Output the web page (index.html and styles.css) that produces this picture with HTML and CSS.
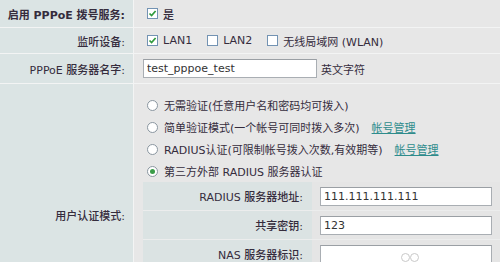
FILE: index.html
```html
<!DOCTYPE html>
<html lang="zh-CN">
<head>
    <meta charset="UTF-8">
    <title>PPPoE 服务器设置</title>
    <link rel="stylesheet" href="styles.css">
</head>
<body>
    <div class="form">
        <!-- 启用 -->
        <div class="label row-1 strong">启用 PPPoE 拨号服务:</div>
        <div class="value row-1">
            <span class="cb checked"><svg viewBox="0 0 9 9"><path d="M1.5 4.5 L3.6 6.6 L7.6 2"/></svg></span>
            <span class="medium">是</span>
        </div>

        <!-- 监听设备 -->
        <div class="label row-2">监听设备:</div>
        <div class="value row-2">
            <span class="cb checked"><svg viewBox="0 0 9 9"><path d="M1.5 4.5 L3.6 6.6 L7.6 2"/></svg></span>
            <span class="item">LAN1</span>
            <span class="cb"></span>
            <span class="item">LAN2</span>
            <span class="cb"></span>
            <span>无线局域网 (WLAN)</span>
        </div>

        <!-- 服务器名字 -->
        <div class="label row-3">PPPoE 服务器名字:</div>
        <div class="value row-3">
            <input class="text name-input" type="text" value="test_pppoe_test">
            <span class="hint">英文字符</span>
        </div>

        <!-- 认证模式 -->
        <div class="label row-4">用户认证模式:</div>
        <div class="value auth">
            <div class="options">
                <div class="option"><span class="radio"></span>无需验证(任意用户名和密码均可拨入)</div>
                <div class="option"><span class="radio"></span>简单验证模式(一个帐号可同时拨入多次)<a class="link" href="#">帐号管理</a></div>
                <div class="option"><span class="radio"></span>RADIUS认证(可限制帐号拨入次数,有效期等)<a class="link" href="#">帐号管理</a></div>
                <div class="option"><span class="radio checked"></span>第三方外部 RADIUS 服务器认证</div>
            </div>
            <div class="radius">
                <div class="sub-label">RADIUS 服务器地址:</div>
                <div class="sub-value"><input class="text" type="text" value="111.111.111.111"></div>
                <div class="sub-label">共享密钥:</div>
                <div class="sub-value"><input class="text" type="text" value="123"></div>
                <div class="sub-label">NAS 服务器标识:</div>
                <div class="sub-value nas">
                    <input class="text" type="text" value="">
                    <span class="rings"><span class="ring"></span><span class="ring"></span></span>
                </div>
            </div>
        </div>
    </div>
</body>
</html>
```

FILE: styles.css
```css
* {
    margin: 0;
    padding: 0;
    box-sizing: border-box;
}

body {
    background-color: #e7e7e7;
    font-family: "DejaVu Sans", "Noto Sans CJK SC", sans-serif;
    font-size: 11px;
    color: #352c3d;
    overflow: hidden;
}

/* 表单网格 */
.form {
    display: grid;
    grid-template-columns: 133px 1fr;
    gap: 1px;
    background-color: #f3f4f4;
}

.label {
    background-color: #dbe4e4;
    font-weight: 500;
    display: flex;
    align-items: center;
    justify-content: flex-end;
    padding-right: 8px;
}

.value {
    background-color: #e7e7e7;
    display: flex;
    align-items: center;
    padding-left: 9px;
}

.row-1 { height: 27px; }
.row-2 { height: 25px; }
.row-3 { height: 29px; }

.label.strong {
    font-weight: bold;
}

.medium {
    font-weight: 500;
}

/* 复选框 */
.cb {
    width: 11px;
    height: 11px;
    border: 1px solid #7393b3;
    background-color: #ffffff;
    margin: 0 5px 0 4px;
    display: inline-flex;
    align-items: center;
    justify-content: center;
    flex-shrink: 0;
}

.cb svg {
    width: 9px;
    height: 9px;
    fill: none;
    stroke: #2f9a3c;
    stroke-width: 1.7;
}

.item {
    margin-right: 11px;
}

/* 输入框 */
.text {
    height: 19px;
    width: 100%;
    border: 1px solid #a9aeb3;
    border-top-color: #9a9fa4;
    background-color: #ffffff;
    font-family: "DejaVu Sans", sans-serif;
    font-size: 11px;
    color: #333333;
    padding: 0 3px;
    outline: none;
}

.name-input {
    width: 174px;
}

.hint {
    margin-left: 4px;
}

/* 认证模式 */
.auth {
    flex-direction: column;
    align-items: stretch;
    padding-top: 10px;
    padding-bottom: 77px;
}

.option {
    height: 22px;
    display: flex;
    align-items: center;
}

.radio {
    width: 11px;
    height: 11px;
    border: 1px solid #8a96a0;
    border-radius: 50%;
    background-color: #ffffff;
    margin: 0 6px 0 4px;
    display: inline-flex;
    align-items: center;
    justify-content: center;
}

.radio.checked::after {
    content: "";
    width: 5px;
    height: 5px;
    border-radius: 50%;
    background-color: #3a9c48;
}

.link {
    color: #2e8c8c;
    text-decoration: underline;
    margin-left: 12px;
}

/* RADIUS 服务器 */
.radius {
    display: grid;
    grid-template-columns: 169px 1fr;
    row-gap: 1px;
    background-color: #eceded;
}

.sub-label {
    height: 28px;
    background-color: #dbe3e3;
    font-weight: 500;
    display: flex;
    align-items: center;
    justify-content: flex-end;
    padding-right: 9px;
}

.sub-value {
    height: 28px;
    background-color: #e5e5e5;
    display: flex;
    align-items: center;
    padding: 0 8px;
}

.nas {
    position: relative;
}

.rings {
    position: absolute;
    left: 89px;
    top: 13px;
    display: flex;
}

.ring {
    width: 9px;
    height: 9px;
    border: 1px solid #c9c9c9;
    border-radius: 50%;
}
```
